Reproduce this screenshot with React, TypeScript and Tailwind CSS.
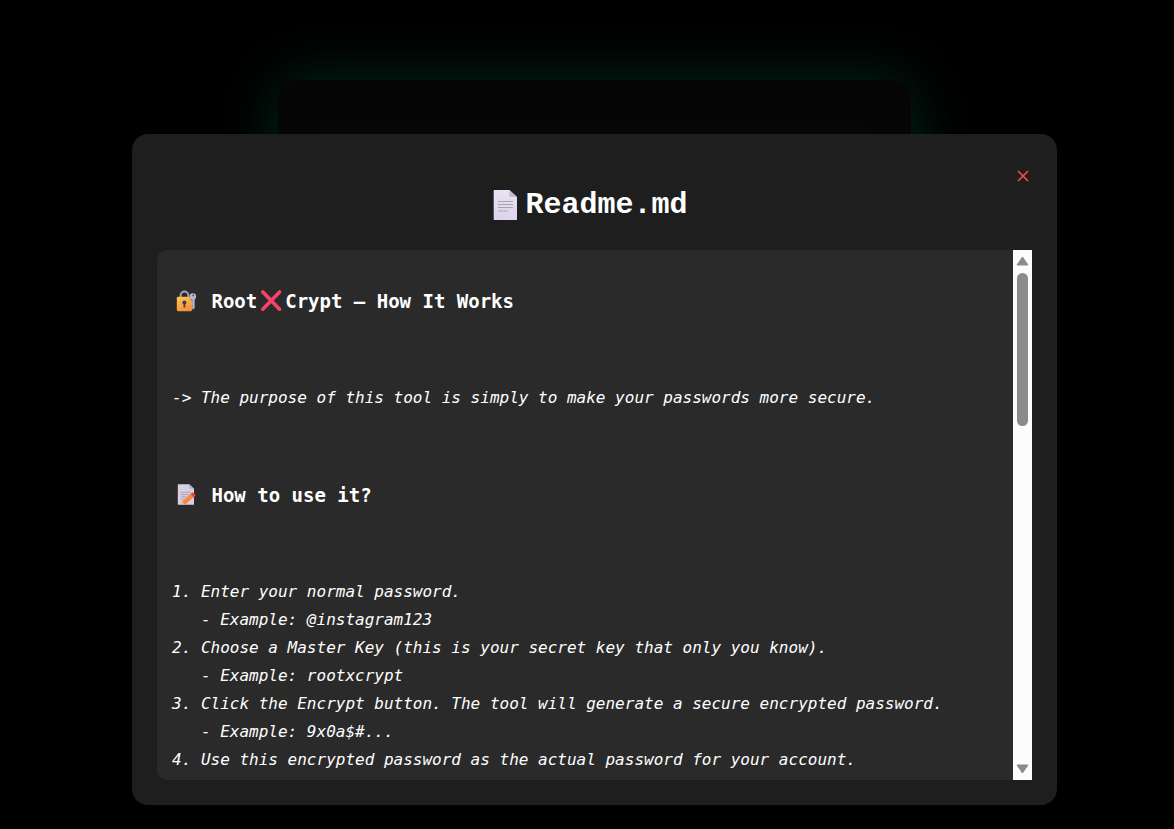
import React from "react";

const steps = [
  { text: "Enter your normal password.", example: "@instagram123" },
  {
    text: "Choose a Master Key (this is your secret key that only you know).",
    example: "rootxcrypt",
  },
  {
    text: "Click the Encrypt button. The tool will generate a secure encrypted password.",
    example: "9x0a$#...",
  },
  { text: "Use this encrypted password as the actual password for your account." },
];

function PageIcon() {
  return (
    <svg viewBox="0 0 24 30" className="h-[30px] w-6 shrink-0" aria-hidden="true">
      <defs>
        <linearGradient id="page" x1="0" y1="0" x2="0" y2="1">
          <stop offset="0" stopColor="#e9e3f1" />
          <stop offset="1" stopColor="#ded3ee" />
        </linearGradient>
      </defs>
      <path d="M1.4 0H16.4L24 7V30H1.4Q.7 30 .7 29.3V.7Q.7 0 1.4 0Z" fill="url(#page)" />
      <path d="M16.4 0L24 7H17.4Q16.4 7 16.4 6Z" fill="#c3bccd" />
      <path d="M5 11.5H20M5 14.5H20M5 17.5H20M5 21H14.5" stroke="#aaa2b4" strokeWidth="1.2" />
    </svg>
  );
}

function LockIcon() {
  return (
    <svg viewBox="0 0 28 24" className="h-6 w-7 shrink-0" aria-hidden="true">
      <defs>
        <linearGradient id="lock" x1="0" y1="0" x2=".5" y2="1">
          <stop offset="0" stopColor="#fdcb4c" />
          <stop offset="1" stopColor="#f5903f" />
        </linearGradient>
      </defs>
      <path d="M8.6 9V6.4a3.9 3.9 0 0 1 7.8 0V9" fill="none" stroke="#aaa1b9" strokeWidth="1.9" />
      <path d="M6.2 7.8H16.8L20.2 12V21L19 22.2H6.2Q4.8 22.2 4.8 20.8V9.2Q4.8 7.8 6.2 7.8Z" fill="url(#lock)" />
      <circle cx="12.4" cy="13.4" r="2" fill="#4b3551" />
      <path d="M11.5 14H13.3V18.6H11.5Z" fill="#4b3551" />
      <path d="M20.2 10H22.7V19L21.4 20.4L20.2 19.2Z" fill="#b6adca" />
      <path d="M20.4 13.5L18.8 15L20.4 16.5Z" fill="#b6adca" />
      <circle cx="20.8" cy="7.6" r="3.3" fill="#bdb3d2" />
      <circle cx="21.2" cy="6.4" r=".9" fill="#55485f" />
    </svg>
  );
}

function CrossIcon() {
  return (
    <svg viewBox="0 0 28 24" className="h-6 w-7 shrink-0" aria-hidden="true">
      <path d="M5.8 3L22.6 20.2M22.6 3L5.8 20.2" stroke="#f8426a" strokeWidth="3.6" strokeLinecap="round" />
    </svg>
  );
}

function MemoIcon() {
  return (
    <svg viewBox="0 0 28 24" className="h-6 w-7 shrink-0" aria-hidden="true">
      <path d="M6.5 1.3H17.2L22 5.8V21.7H6.5Q5.8 21.7 5.8 21V2Q5.8 1.3 6.5 1.3Z" fill="#d8d0e0" />
      <path d="M17.2 1.3L22 5.8H17.2Z" fill="#bbb1c5" />
      <path d="M8.8 9.3H19M8.8 11.6H17.5M8.8 13.9H15M8.8 16.2H13" stroke="#a69caf" strokeWidth=".9" />
      <path d="M9.4 21.9L10.5 18.2L18.3 11.2L21.4 14.6L13.2 21.4Z" fill="#fb8543" />
      <path d="M18.3 11.2L20.1 9.8Q21 9.3 21.8 10.1L23.1 11.6Q23.8 12.5 23 13.3L21.4 14.6Z" fill="#e9473f" />
      <path d="M9.4 21.9L10.5 18.2L13.2 21.4Z" fill="#e9b184" />
    </svg>
  );
}

function ScrollRail() {
  return (
    <div aria-hidden="true" className="flex w-[19px] shrink-0 flex-col items-center bg-[#fcfcfc] py-1.5">
      <svg viewBox="0 0 13 10" className="h-2.5 w-[13px] shrink-0">
        <path d="M6.5 1L12 9H1Z" fill="#8b8b8b" stroke="#8b8b8b" strokeLinejoin="round" />
      </svg>
      <div className="mt-[7px] h-[153px] w-[11px] rounded-full bg-[#8b8b8b]" />
      <svg viewBox="0 0 13 10" className="mt-auto h-2.5 w-[13px] shrink-0">
        <path d="M6.5 9L12 1H1Z" fill="#8b8b8b" stroke="#8b8b8b" strokeLinejoin="round" />
      </svg>
    </div>
  );
}

export default function App() {
  return (
    <div className="relative min-h-screen overflow-hidden bg-black pl-[15px] text-white">
      <div className="px-4 pt-20">
        <div className="mx-auto h-[600px] max-w-[633px] rounded-[20px] bg-[#050505] px-9 pt-11 shadow-[0_0_60px_#00281e]">
          <div className="h-full rounded-xl bg-[#060606]" />
        </div>
      </div>

      <div className="absolute inset-0 pt-[134px] pl-[15px]">
        <section
          role="dialog"
          aria-labelledby="readme-title"
          className="relative mx-auto max-w-[925px] rounded-2xl bg-[#1e1e1e] p-[25px]"
        >
          <button
            type="button"
            aria-label="Close"
            className="absolute top-8 right-6 flex size-5 items-center justify-center text-[#ff4d4d]"
          >
            <svg viewBox="0 0 12 12" className="size-3" fill="none" stroke="currentColor" strokeWidth="1.5" aria-hidden="true">
              <path d="M1 1L11 11M11 1L1 11" />
            </svg>
          </button>

          <h1
            id="readme-title"
            className="mt-6 mb-[23px] flex h-11 items-center justify-center gap-2 pr-2 font-['Liberation_Mono',monospace] text-[30px] font-bold"
          >
            <PageIcon />
            Readme.md
          </h1>

          <div className="flex h-[530px] overflow-hidden rounded-l-[10px] bg-[#2a2a2a]">
            <div
              tabIndex={0}
              className="flex min-w-0 flex-1 flex-col gap-[68px] overflow-y-auto px-[15px] pt-9 font-['DejaVu_Sans_Mono',monospace] text-base leading-7 [scrollbar-width:none]"
            >
              <h2 className="flex items-center text-[19px] leading-[30px] font-bold whitespace-pre">
                <LockIcon />
                <span> Root</span>
                <CrossIcon />
                <span>Crypt – How It Works</span>
              </h2>
              <p className="italic">
                {"-> The purpose of this tool is simply to make your passwords more secure."}
              </p>
              <h2 className="flex items-center text-[19px] leading-[30px] font-bold whitespace-pre">
                <MemoIcon />
                <span> How to use it?</span>
              </h2>
              <ol className="whitespace-pre-wrap italic">
                {steps.map((step, i) => (
                  <li key={step.text}>
                    {`${i + 1}. ${step.text}`}
                    {step.example && <div>{`   - Example: ${step.example}`}</div>}
                  </li>
                ))}
              </ol>
            </div>
            <ScrollRail />
          </div>
        </section>
      </div>
    </div>
  );
}
